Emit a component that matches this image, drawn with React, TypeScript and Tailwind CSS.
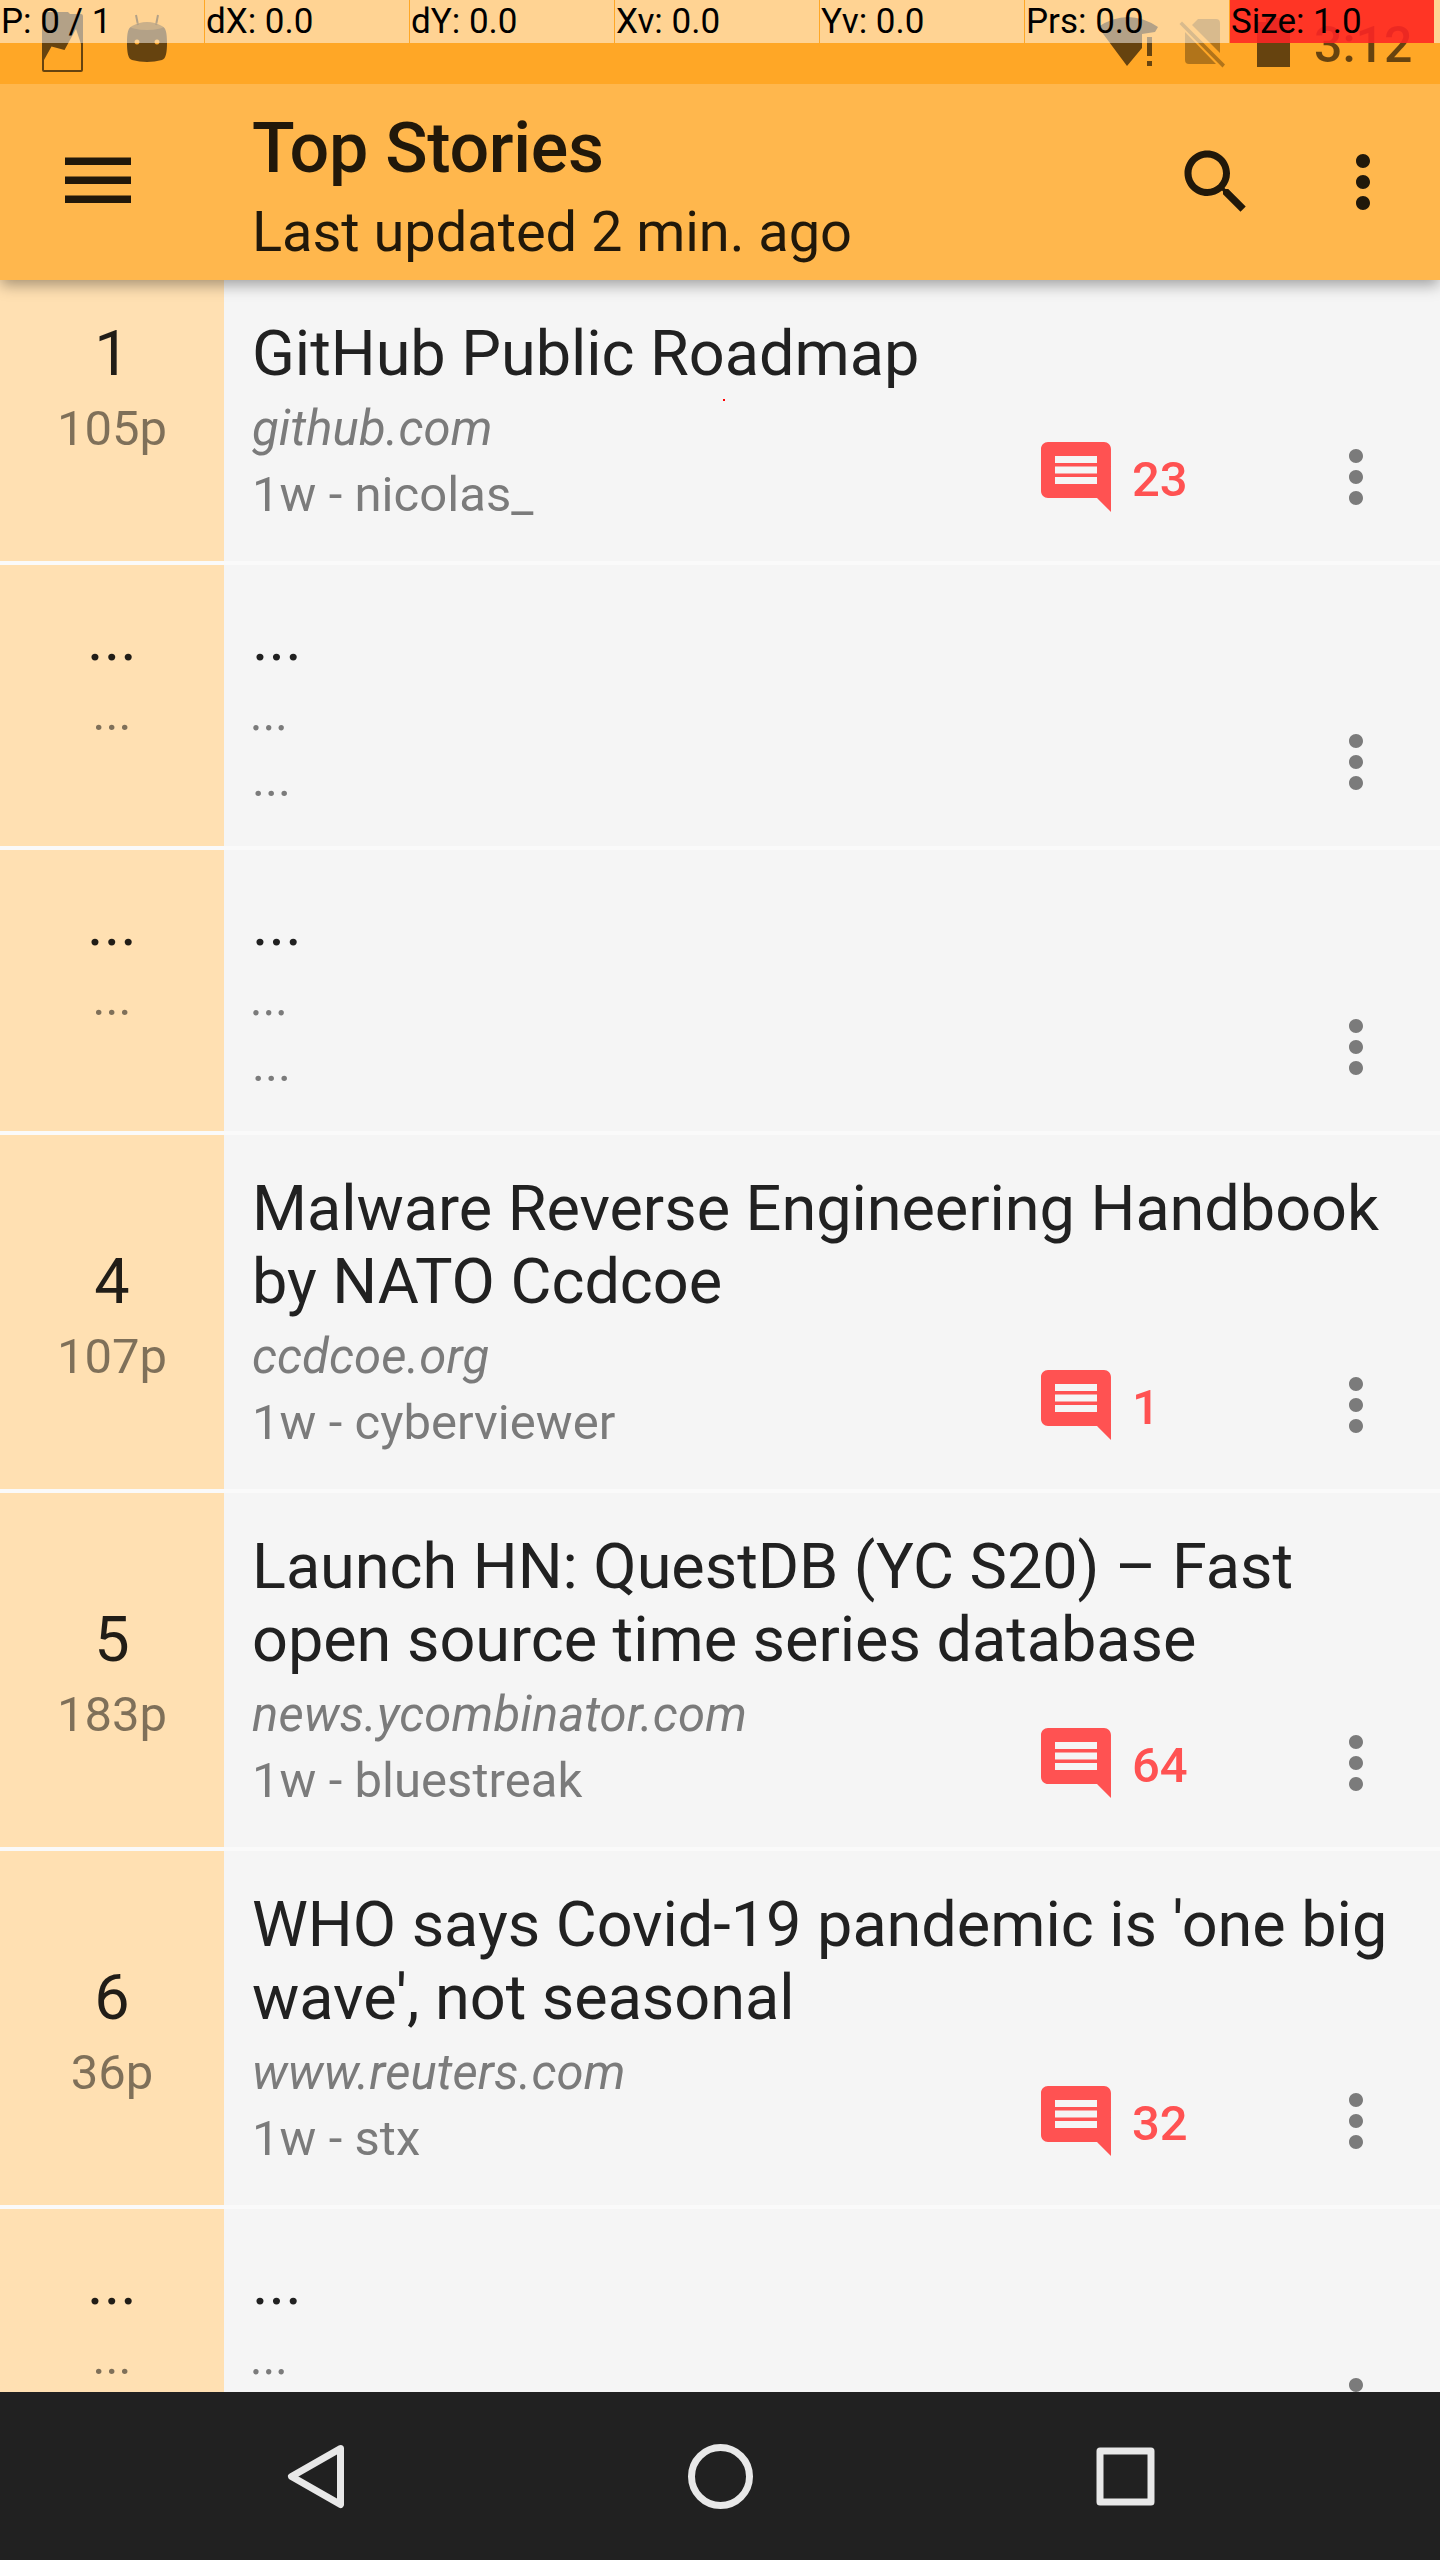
import React from "react";

type Story = {
  rank: string;
  points: string;
  title: string[];
  site: string;
  info?: string;
  comments?: string;
};

const placeholder: Story = { rank: "...", points: "...", title: ["..."], site: "...", info: "..." };

const stories: Story[] = [
  { rank: "1", points: "105p", title: ["GitHub Public Roadmap"], site: "github.com", info: "1w - nicolas_", comments: "23" },
  placeholder,
  placeholder,
  { rank: "4", points: "107p", title: ["Malware Reverse Engineering Handbook", "by NATO Ccdcoe"], site: "ccdcoe.org", info: "1w - cyberviewer", comments: "1" },
  { rank: "5", points: "183p", title: ["Launch HN: QuestDB (YC S20) – Fast", "open source time series database"], site: "news.ycombinator.com", info: "1w - bluestreak", comments: "64" },
  { rank: "6", points: "36p", title: ["WHO says Covid-19 pandemic is 'one big", "wave', not seasonal"], site: "www.reuters.com", info: "1w - stx", comments: "32" },
  { ...placeholder, info: undefined },
];

const pointerCells = ["P: 0 / 1", "dX: 0.0", "dY: 0.0", "Xv: 0.0", "Yv: 0.0", "Prs: 0.0"];

function MoreIcon({ className }: { className: string }) {
  return (
    <svg viewBox="0 0 24 24" className={className} fill="currentColor">
      <path d="M12 8c1.1 0 2-.9 2-2s-.9-2-2-2-2 .9-2 2 .9 2 2 2zm0 2c-1.1 0-2 .9-2 2s.9 2 2 2 2-.9 2-2-.9-2-2-2zm0 6c-1.1 0-2 .9-2 2s.9 2 2 2 2-.9 2-2-.9-2-2-2z" />
    </svg>
  );
}

function StatusBar() {
  return (
    <div className="relative z-20 h-[84px] shrink-0 bg-[#ffa726]">
      <svg viewBox="0 0 1440 84" className="absolute inset-0 h-[84px] w-[1440px] text-black/60" fill="currentColor">
        <path
          fillRule="evenodd"
          d="M44 12H68L70 14H81Q83 14 83 16V70Q83 72 81 72H44Q42 72 42 70V14Q42 12 44 12ZM44 60V70H81V44L76 29L64.500 50L51.500 46.500Z"
        />
        <path
          fillRule="evenodd"
          d="M127 43C127 33 128 28 132 26Q147 18 162 26C166 28 167 33 167 43C167 52 166 59 162 60Q147 64 132 60C128 59 127 52 127 43ZM137 39.500a2.500 2.500 0 1 0 .01 0ZM157 39.500a2.500 2.500 0 1 0 .01 0Z"
        />
        <path d="M136 15L138 25M158 15L156 25" stroke="currentColor" strokeWidth="2" fill="none" />
        <ellipse cx="147" cy="26" rx="17" ry="4" className="text-[#ffa726]/30" />
        <path d="M1098 27Q1128 7 1158 27L1155 32L1142 34V48L1127 66Z" />
        <path d="M1147 37H1152V56H1147ZM1147 61H1152V66H1147Z" />
        <g opacity=".5">
          <path d="M1192 25L1198 19H1216Q1220 19 1220 23V53ZM1185 32V60Q1185 64 1189 64H1216Z" />
          <path d="M1179.500 24L1182 21.500L1225 64.500L1222.500 67.500Z" />
        </g>
        <path d="M1257 22H1266V18H1281V22H1290V67H1257Z" />
      </svg>
      <span className="absolute top-[20px] left-[1314px] text-[50px] leading-[50px] font-medium text-black/60">3:12</span>
      <div className="absolute inset-x-0 top-0 flex h-[43px] bg-white/50 text-[35px] leading-[43px] text-black">
        {pointerCells.map((cell) => (
          <span key={cell} className="w-[205px] border-r border-[#ffa726] pl-[1px] whitespace-nowrap">
            {cell}
          </span>
        ))}
        <span className="w-[204px] bg-[#ff0000]/75 pl-[1px]">Size: 1.0</span>
      </div>
    </div>
  );
}

function Toolbar() {
  return (
    <header className="relative z-10 flex h-[196px] shrink-0 items-center bg-[#ffb74d] pl-[65px] text-black/87 shadow-[0_6px_14px_-1px_rgba(0,0,0,0.35)]">
      <svg viewBox="0 0 66 47" className="-mt-[3px] h-[47px] w-[66px]" fill="currentColor">
        <path d="M0 .6H66V7.900H0zM0 19.600H66V26.900H0zM0 38.600H66V45.900H0z" />
      </svg>
      <div className="mt-[23px] ml-[121px] flex-1 self-start">
        <h1 className="text-[70px] leading-[82px] font-medium tracking-[-0.3px]">Top Stories</h1>
        <p className="mt-[10px] text-[56px] leading-[66px] tracking-[-0.05px]">Last updated 2 min. ago</p>
      </div>
      <svg viewBox="0 0 24 24" className="h-[84px] w-[84px]" fill="currentColor">
        <path d="M15.500 14h-.79l-.28-.27C15.410 12.590 16 11.110 16 9.500 16 5.910 13.090 3 9.500 3S3 5.910 3 9.500 5.910 16 9.500 16c1.610 0 3.090-.59 4.230-1.570l.27.28v.79l5 4.990L20.490 19l-4.990-5zm-6 0C7.010 14 5 11.990 5 9.500S7.010 5 9.500 5 14 7.010 14 9.500 11.990 14 9.500 14z" />
      </svg>
      <MoreIcon className="mr-[35px] ml-[63px] h-[84px] w-[84px]" />
    </header>
  );
}

function StoryRow({ story }: { story: Story }) {
  return (
    <li className="flex shrink-0">
      <div className="flex w-[224px] flex-col items-center justify-end bg-[#ffe0b2] pb-[99px]">
        <span className="mb-[6px] text-[63px] leading-[73px] text-black/87">{story.rank}</span>
        <span className="text-[49px] leading-[66px] text-black/50">{story.points}</span>
      </div>
      <div className="relative flex-1 bg-[#f5f5f5] pt-[37px] pb-[33px] pl-[28px] text-[49px] leading-[66px] text-[#7b7b7b]">
        <h2 className="text-[63px] leading-[73px] tracking-[-0.04px] whitespace-nowrap text-[#212121]">
          {story.title.map((line) => (
            <span key={line} className="block">{line}</span>
          ))}
        </h2>
        <p className="mt-[6px] tracking-[0.15px] italic">{story.site}</p>
        <p className="min-h-[66px] tracking-[0.05px]">{story.info}</p>
        <div className="absolute right-[42px] bottom-[42px] flex items-center">
          {story.comments && (
            <div className="mr-[112px] flex w-[168px] items-center text-[#ff5252]">
              <svg viewBox="0 0 24 24" className="h-[84px] w-[84px] shrink-0" fill="currentColor">
                <path d="M21.990 4c0-1.100-.89-2-1.990-2H4c-1.100 0-2 .9-2 2v12c0 1.100.9 2 2 2h14l4 4-.01-18zM18 14H6v-2h12v2zm0-3H6V9h12v2zm0-3H6V6h12v2z" />
              </svg>
              <span className="mt-[5px] ml-[14px] font-medium">{story.comments}</span>
            </div>
          )}
          <MoreIcon className="h-[84px] w-[84px]" />
        </div>
      </div>
    </li>
  );
}

function NavigationBar() {
  return (
    <nav className="flex h-[168px] shrink-0 items-center justify-center gap-[305px] bg-[#212121] text-[#e8e8e8]">
      <svg viewBox="0 0 100 100" className="h-[100px] w-[100px]" fill="none" stroke="currentColor" strokeWidth="7" strokeLinejoin="round">
        <path d="M75.500 22.500L26.500 50.500L75.500 78.500Z" />
      </svg>
      <svg viewBox="0 0 100 100" className="h-[100px] w-[100px]" fill="none" stroke="currentColor" strokeWidth="7">
        <circle cx="50.500" cy="50.500" r="29" />
      </svg>
      <svg viewBox="0 0 100 100" className="h-[100px] w-[100px]" fill="none" stroke="currentColor" strokeWidth="7" strokeLinejoin="round">
        <rect x="25" y="25" width="51" height="51" />
      </svg>
    </nav>
  );
}

export default function App() {
  return (
    <div className="relative flex h-[2560px] w-[1440px] flex-col overflow-hidden bg-[#fafafa] font-['Roboto',sans-serif]">
      <StatusBar />
      <Toolbar />
      <ul className="flex min-h-0 flex-1 flex-col gap-[4px] overflow-hidden">
        {stories.map((story, i) => (
          <StoryRow key={i} story={story} />
        ))}
      </ul>
      <NavigationBar />
      {/* last touch position of the pointer overlay */}
      <span className="absolute top-[399px] left-[723px] size-[2px] bg-[#ff0000]" />
    </div>
  );
}
